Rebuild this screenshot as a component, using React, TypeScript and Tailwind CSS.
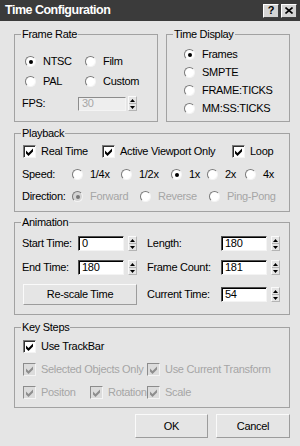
import React from "react";

type RProps = { checked?: boolean; disabled?: boolean };

const Radio = ({ checked = false, disabled = false }: RProps) => (
  <span
    className={
      disabled && checked
        ? "flex h-[11px] w-[11px] shrink-0 items-center justify-center rounded-full border border-t-[#7a7a7a] border-l-[#7a7a7a] border-r-[#f4f4f4] border-b-[#f4f4f4] bg-[#d4d4d4]"
        : "flex h-[11px] w-[11px] shrink-0 items-center justify-center rounded-full border border-t-[#7a7a7a] border-l-[#7a7a7a] border-r-[#f4f4f4] border-b-[#f4f4f4] bg-white"
    }
  >
    {checked ? (
      <span className={disabled ? "h-[4px] w-[4px] rounded-full bg-[#777777]" : "h-[4px] w-[4px] rounded-full bg-black"} />
    ) : null}
  </span>
);

const RadioOpt = ({ label, checked = false, disabled = false, className = "" }: RProps & { label: string; className?: string }) => (
  <div className={"flex h-[13px] items-center gap-[7px] whitespace-nowrap " + className}>
    <Radio checked={checked} disabled={disabled} />
    <span className={disabled ? "text-[#a6a6a6]" : "text-black"}>{label}</span>
  </div>
);

const Check = ({ disabled = false }: { disabled?: boolean }) => (
  <span
    className={
      disabled
        ? "flex h-[13px] w-[13px] shrink-0 items-center justify-center border border-t-[#8c8c8c] border-l-[#8c8c8c] border-r-[#f4f4f4] border-b-[#f4f4f4] bg-[#dcdcdc]"
        : "flex h-[13px] w-[13px] shrink-0 items-center justify-center border border-t-[#7a7a7a] border-l-[#7a7a7a] border-r-[#f4f4f4] border-b-[#f4f4f4] bg-white shadow-[inset_1px_1px_0_#303030]"
    }
  >
    <svg width="9" height="9" viewBox="0 0 9 9">
      <path d="M1 3.5 L3.5 6 L8 1.5 L8 4.5 L3.5 9 L1 6.5 Z" fill={disabled ? "#8e8e8e" : "#000"} />
    </svg>
  </span>
);

const CheckOpt = ({ label, disabled = false, className = "" }: { label: string; disabled?: boolean; className?: string }) => (
  <div className={"flex h-[13px] items-center gap-[5px] whitespace-nowrap " + className}>
    <Check disabled={disabled} />
    <span className={disabled ? "text-[#a6a6a6]" : "text-black"}>{label}</span>
  </div>
);

const Spin = ({ className = "" }: { className?: string }) => (
  <div className={"flex h-[15px] w-[9px] shrink-0 flex-col border border-t-[#fafafa] border-l-[#fafafa] border-r-[#b4b4b4] border-b-[#b4b4b4] " + className}>
    <div className="flex flex-1 items-center justify-center border-b border-[#b4b4b4]">
      <svg width="5" height="3" viewBox="0 0 5 3">
        <path d="M2.5 0 L5 3 L0 3 Z" fill="#000" />
      </svg>
    </div>
    <div className="flex flex-1 items-center justify-center">
      <svg width="5" height="3" viewBox="0 0 5 3">
        <path d="M0 0 L5 0 L2.5 3 Z" fill="#000" />
      </svg>
    </div>
  </div>
);

const Field = ({ value }: { value: string }) => (
  <div className="flex h-[15px] w-[46px] shrink-0 items-center border border-t-[#505050] border-l-[#505050] border-r-[#f4f4f4] border-b-[#f4f4f4] bg-white pl-[3px] text-black shadow-[inset_1px_1px_0_#000]">
    {value}
  </div>
);

const Group = ({ title, className, children }: { title: string; className: string; children: React.ReactNode }) => (
  <fieldset className={"m-0 min-w-0 border border-[#a2a2a2] p-0 " + className}>
    <legend className="ml-[6px] px-[1px] leading-[13px]">{title}</legend>
    {children}
  </fieldset>
);

const Btn = ({ label, className }: { label: string; className: string }) => (
  <div className={"flex items-center justify-center border border-t-[#fafafa] border-l-[#fafafa] border-r-[#9c9c9c] border-b-[#9c9c9c] bg-[#e5e5e5] text-black " + className}>
    {label}
  </div>
);

export default function App() {
  return (
    <div className="h-[446px] w-[300px] overflow-hidden bg-[#e5e5e5] font-['Liberation_Sans',Arial,sans-serif] text-[11px] leading-[13px] tracking-[-0.3px] text-black">
      {/* Title bar */}
      <div className="flex h-[21px] items-center justify-between bg-[#3b3b3b] pl-[5px] pr-[3px]">
        <span className="text-[12.5px] font-bold tracking-[-0.5px] text-white">Time Configuration</span>
        <div className="flex gap-[2px]">
          <span className="flex h-[14px] w-[16px] items-center justify-center border border-t-white border-l-white border-r-[#404040] border-b-[#404040] bg-[#d4d4d4] text-[11px] font-bold leading-none text-black">
            ?
          </span>
          <span className="flex h-[14px] w-[16px] items-center justify-center border border-t-white border-l-white border-r-[#404040] border-b-[#404040] bg-[#d4d4d4]">
            <svg width="8" height="7" viewBox="0 0 8 7">
              <path d="M0.5 0.5 L7.5 6.5 M7.5 0.5 L0.5 6.5" stroke="#000" strokeWidth="1.6" />
            </svg>
          </span>
        </div>
      </div>

      {/* Body */}
      <div className="pl-[14px] pr-[10px] pt-[7px]">
        <div className="flex gap-[8px]">
          <Group title="Frame Rate" className="h-[94px] w-[144px]">
            <div className="flex flex-col pt-[14px]">
              <div className="grid grid-cols-[60px_auto] pl-[10px]">
                <RadioOpt label="NTSC" checked />
                <RadioOpt label="Film" />
              </div>
              <div className="mt-[7px] grid grid-cols-[60px_auto] pl-[10px]">
                <RadioOpt label="PAL" />
                <RadioOpt label="Custom" />
              </div>
              <div className="mt-[8px] flex items-center pl-[7px]">
                <span className="w-[56px]">FPS:</span>
                <div className="flex h-[14px] w-[48px] items-center border border-t-[#8c8c8c] border-l-[#8c8c8c] border-r-[#f4f4f4] border-b-[#f4f4f4] bg-[#eeeeee] pl-[3px] text-[#a6a6a6]">
                  30
                </div>
                <Spin className="ml-[2px] h-[14px]" />
              </div>
            </div>
          </Group>
          <Group title="Time Display" className="h-[94px] w-[124px]">
            <div className="flex flex-col gap-[5px] pl-[17px] pt-[7px]">
              <RadioOpt label="Frames" checked />
              <RadioOpt label="SMPTE" />
              <RadioOpt label="FRAME:TICKS" />
              <RadioOpt label="MM:SS:TICKS" />
            </div>
          </Group>
        </div>

        <Group title="Playback" className="mt-[5px] h-[85px]">
          <div className="flex flex-col pt-[5px]">
            <div className="flex pl-[8px]">
              <CheckOpt label="Real Time" className="w-[79px]" />
              <CheckOpt label="Active Viewport Only" className="w-[130px]" />
              <CheckOpt label="Loop" />
            </div>
            <div className="mt-[10px] flex items-center pl-[7px]">
              <span className="w-[50px]">Speed:</span>
              <RadioOpt label="1/4x" className="w-[49px]" />
              <RadioOpt label="1/2x" className="w-[50px]" />
              <RadioOpt label="1x" checked className="w-[36px]" />
              <RadioOpt label="2x" className="w-[38px]" />
              <RadioOpt label="4x" />
            </div>
            <div className="mt-[9px] flex items-center pl-[7px]">
              <span className="w-[50px] whitespace-nowrap">Direction:</span>
              <RadioOpt label="Forward" checked disabled className="w-[68px]" />
              <RadioOpt label="Reverse" disabled className="w-[69px]" />
              <RadioOpt label="Ping-Pong" disabled />
            </div>
          </div>
        </Group>

        <Group title="Animation" className="mt-[4px] h-[99px]">
          <div className="grid grid-cols-[125px_auto] items-center gap-y-[9px] pl-[7px] pt-[7px]">
            <div className="flex items-center">
              <span className="w-[56px] whitespace-nowrap">Start Time:</span>
              <Field value="0" />
              <Spin className="ml-[4px]" />
            </div>
            <div className="flex items-center">
              <span className="w-[74px] whitespace-nowrap">Length:</span>
              <Field value="180" />
              <Spin className="ml-[4px]" />
            </div>
            <div className="flex items-center">
              <span className="w-[56px] whitespace-nowrap">End Time:</span>
              <Field value="180" />
              <Spin className="ml-[4px]" />
            </div>
            <div className="flex items-center">
              <span className="w-[74px] whitespace-nowrap">Frame Count:</span>
              <Field value="181" />
              <Spin className="ml-[4px]" />
            </div>
            <div className="flex items-center">
              <Btn label="Re-scale Time" className="ml-[1px] h-[21px] w-[114px]" />
            </div>
            <div className="flex items-center">
              <span className="w-[74px] whitespace-nowrap">Current Time:</span>
              <Field value="54" />
              <Spin className="ml-[4px]" />
            </div>
          </div>
        </Group>

        <Group title="Key Steps" className="mt-[6px] h-[87px]">
          <div className="flex flex-col pl-[8px] pt-[6px]">
            <CheckOpt label="Use TrackBar" />
            <div className="mt-[10px] flex">
              <CheckOpt label="Selected Objects Only" disabled className="w-[124px]" />
              <CheckOpt label="Use Current Transform" disabled />
            </div>
            <div className="mt-[10px] flex">
              <CheckOpt label="Positon" disabled className="w-[67px]" />
              <CheckOpt label="Rotation" disabled className="w-[57px]" />
              <CheckOpt label="Scale" disabled />
            </div>
          </div>
        </Group>

        <div className="mt-[6px] flex justify-end gap-[8px]">
          <Btn label="OK" className="h-[24px] w-[73px]" />
          <Btn label="Cancel" className="h-[24px] w-[74px]" />
        </div>
      </div>
    </div>
  );
}
